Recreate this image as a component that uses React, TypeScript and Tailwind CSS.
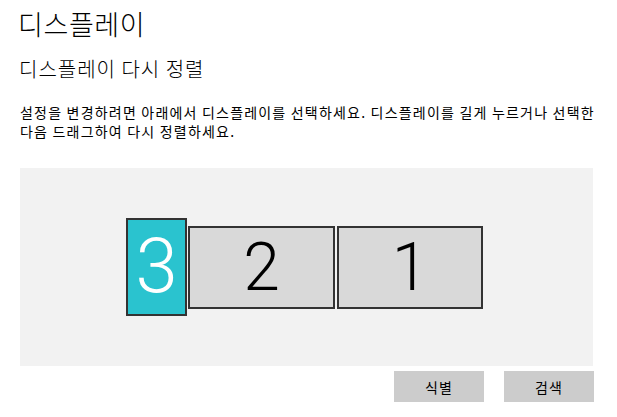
import React from "react";

const kr = "font-['Noto_Sans_CJK_KR','Noto_Sans_CJK_SC',sans-serif]";
const num = "font-['Roboto','Open_Sans',sans-serif] font-light";

export default function App() {
  return (
    <div className={`w-[617px] h-[417px] bg-white overflow-hidden pl-5 text-black ${kr}`}>
      <h1 className="text-[27px] leading-[36px] pt-[6px] -ml-[2px] font-light tracking-[0.6px]">디스플레이</h1>
      <h2 className="text-[20px] leading-[28px] mt-[13px] -ml-[1px] tracking-[1px] font-light">디스플레이 다시 정렬</h2>
      <p className="text-[14px] leading-[19px] mt-[20px] tracking-[1.2px] whitespace-nowrap">
        설정을 변경하려면 아래에서 디스플레이를 선택하세요. 디스플레이를 길게 누르거나 선택한
        <br />
        다음 드래그하여 다시 정렬하세요.
      </p>
      <div className="mt-[27px] w-[573px] h-[198px] bg-[#f2f2f2] flex items-center pl-[106px]">
        <div className="w-[61px] h-[98px] bg-[#2ac3cf] border-2 border-[#333333] flex items-center justify-center">
          <span className={`${num} text-white text-[76px] leading-none -mt-[2px]`}>3</span>
        </div>
        <div className="ml-[1px] w-[147px] h-[83px] bg-[#d9d9d9] border-2 border-[#333333] flex items-center justify-center">
          <span className={`${num} text-black text-[66px] leading-none mt-[2px]`}>2</span>
        </div>
        <div className="ml-[2px] w-[146px] h-[83px] bg-[#d9d9d9] border-2 border-[#333333] flex items-center justify-center">
          <span className={`${num} text-black text-[66px] leading-none mt-[2px]`}>1</span>
        </div>
      </div>
      <div className="w-[574px] mt-[5px] flex justify-end gap-5">
        <button className="w-[90px] h-[31px] bg-[#cccccc] text-[14px] leading-none tracking-[1px]">식별</button>
        <button className="w-[90px] h-[31px] bg-[#cccccc] text-[14px] leading-none tracking-[1px]">검색</button>
      </div>
    </div>
  );
}
